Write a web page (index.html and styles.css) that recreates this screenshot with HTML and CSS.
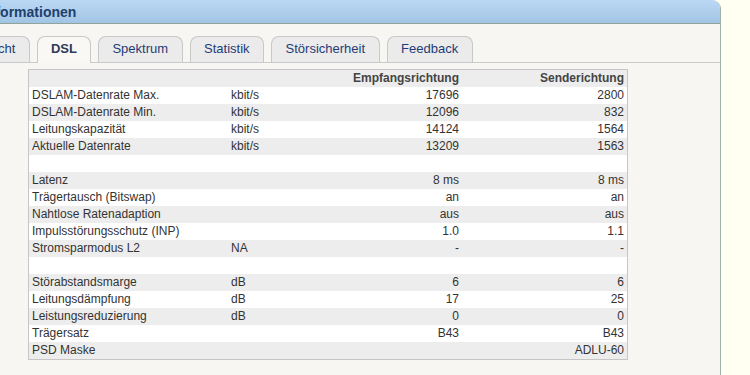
FILE: index.html
```html
<!DOCTYPE html>
<html lang="de">
<head>
<meta charset="utf-8">
<title>DSL-Informationen</title>
<link rel="stylesheet" href="styles.css">
</head>
<body>
<div class="panel">
  <div class="head"><h1 class="title">Informationen</h1></div>
  <ul class="tabs">
    <li class="tab first">Übersicht</li>
    <li class="tab active">DSL</li>
    <li class="tab">Spektrum</li>
    <li class="tab">Statistik</li>
    <li class="tab">Störsicherheit</li>
    <li class="tab">Feedback</li>
  </ul>
  <table class="dsl">
    <colgroup>
      <col class="c1"><col class="c2"><col class="c3"><col class="c4">
    </colgroup>
    <tr><th></th><th></th><th class="num">Empfangsrichtung</th><th class="num">Senderichtung</th></tr>
    <tr><td>DSLAM-Datenrate Max.</td><td>kbit/s</td><td class="num">17696</td><td class="num">2800</td></tr>
    <tr><td>DSLAM-Datenrate Min.</td><td>kbit/s</td><td class="num">12096</td><td class="num">832</td></tr>
    <tr><td>Leitungskapazität</td><td>kbit/s</td><td class="num">14124</td><td class="num">1564</td></tr>
    <tr><td>Aktuelle Datenrate</td><td>kbit/s</td><td class="num">13209</td><td class="num">1563</td></tr>
    <tr><td></td><td></td><td></td><td></td></tr>
    <tr><td>Latenz</td><td></td><td class="num">8 ms</td><td class="num">8 ms</td></tr>
    <tr><td>Trägertausch (Bitswap)</td><td></td><td class="num">an</td><td class="num">an</td></tr>
    <tr><td>Nahtlose Ratenadaption</td><td></td><td class="num">aus</td><td class="num">aus</td></tr>
    <tr><td>Impulsstörungsschutz (INP)</td><td></td><td class="num">1.0</td><td class="num">1.1</td></tr>
    <tr><td>Stromsparmodus L2</td><td>NA</td><td class="num">-</td><td class="num">-</td></tr>
    <tr><td></td><td></td><td></td><td></td></tr>
    <tr><td>Störabstandsmarge</td><td>dB</td><td class="num">6</td><td class="num">6</td></tr>
    <tr><td>Leitungsdämpfung</td><td>dB</td><td class="num">17</td><td class="num">25</td></tr>
    <tr><td>Leistungsreduzierung</td><td>dB</td><td class="num">0</td><td class="num">0</td></tr>
    <tr><td>Trägersatz</td><td></td><td class="num">B43</td><td class="num">B43</td></tr>
    <tr><td>PSD Maske</td><td></td><td class="num"></td><td class="num">ADLU-60</td></tr>
  </table>
</div>
</body>
</html>
```

FILE: styles.css
```css
html, body {
  margin: 0;
  padding: 0;
}
body {
  background: #fffff2;
  font-family: "Liberation Sans", Arial, sans-serif;
  overflow: hidden;
  height: 375px;
}
.panel {
  width: 720px;
  height: 375px;
  background: #f7f6f2;
  border-right: 1px solid #9fb0aa;
  border-top-right-radius: 9px;
  overflow: hidden;
}
.head {
  height: 23px;
  background: linear-gradient(#bad8f4, #a2c4e4);
  border-bottom: 1px solid #8fa39b;
  display: flex;
  align-items: center;
}
.title {
  margin: 1px 0 0 -17px;
  font-size: 14px;
  font-weight: bold;
  color: #1f3f6c;
  line-height: 23px;
}
.tabs {
  display: flex;
  align-items: flex-start;
  gap: 7px;
  list-style: none;
  margin: 12px 0 0;
  padding: 0;
  height: 26px;
  border-bottom: 1px solid #cacaca;
}
.tab {
  box-sizing: border-box;
  height: 26px;
  padding: 0 13.5px;
  border: 1px solid #c8c8c8;
  border-bottom: none;
  border-radius: 8px 8px 0 0;
  background: #ebebeb;
  color: #1e3c78;
  font-size: 13px;
  line-height: 24px;
  white-space: nowrap;
}
.tab.first {
  margin-left: -54px;
}
.tab.active {
  height: 27px;
  padding: 0 13px;
  background: #f9f8f5;
  color: #2e3b57;
  font-weight: bold;
}
.dsl {
  margin: 6px 0 0 28px;
  width: 600px;
  table-layout: fixed;
  border-collapse: separate;
  border-spacing: 0;
  border: 1px solid #c6c6c6;
  font-size: 12px;
  color: #333;
}
.c1 { width: 199px; }
.c2 { width: 102px; }
.c3 { width: 132px; }
.c4 { width: 165px; }
.dsl td, .dsl th {
  height: 17px;
  padding: 0 3px;
  line-height: 17px;
  white-space: nowrap;
  text-align: left;
  overflow: hidden;
}
.dsl th {
  font-weight: bold;
  color: #444;
}
.dsl .num {
  text-align: right;
}
.dsl tr:nth-child(odd) {
  background: #ededed;
}
.dsl tr:nth-child(even) {
  background: #ffffff;
}
```
